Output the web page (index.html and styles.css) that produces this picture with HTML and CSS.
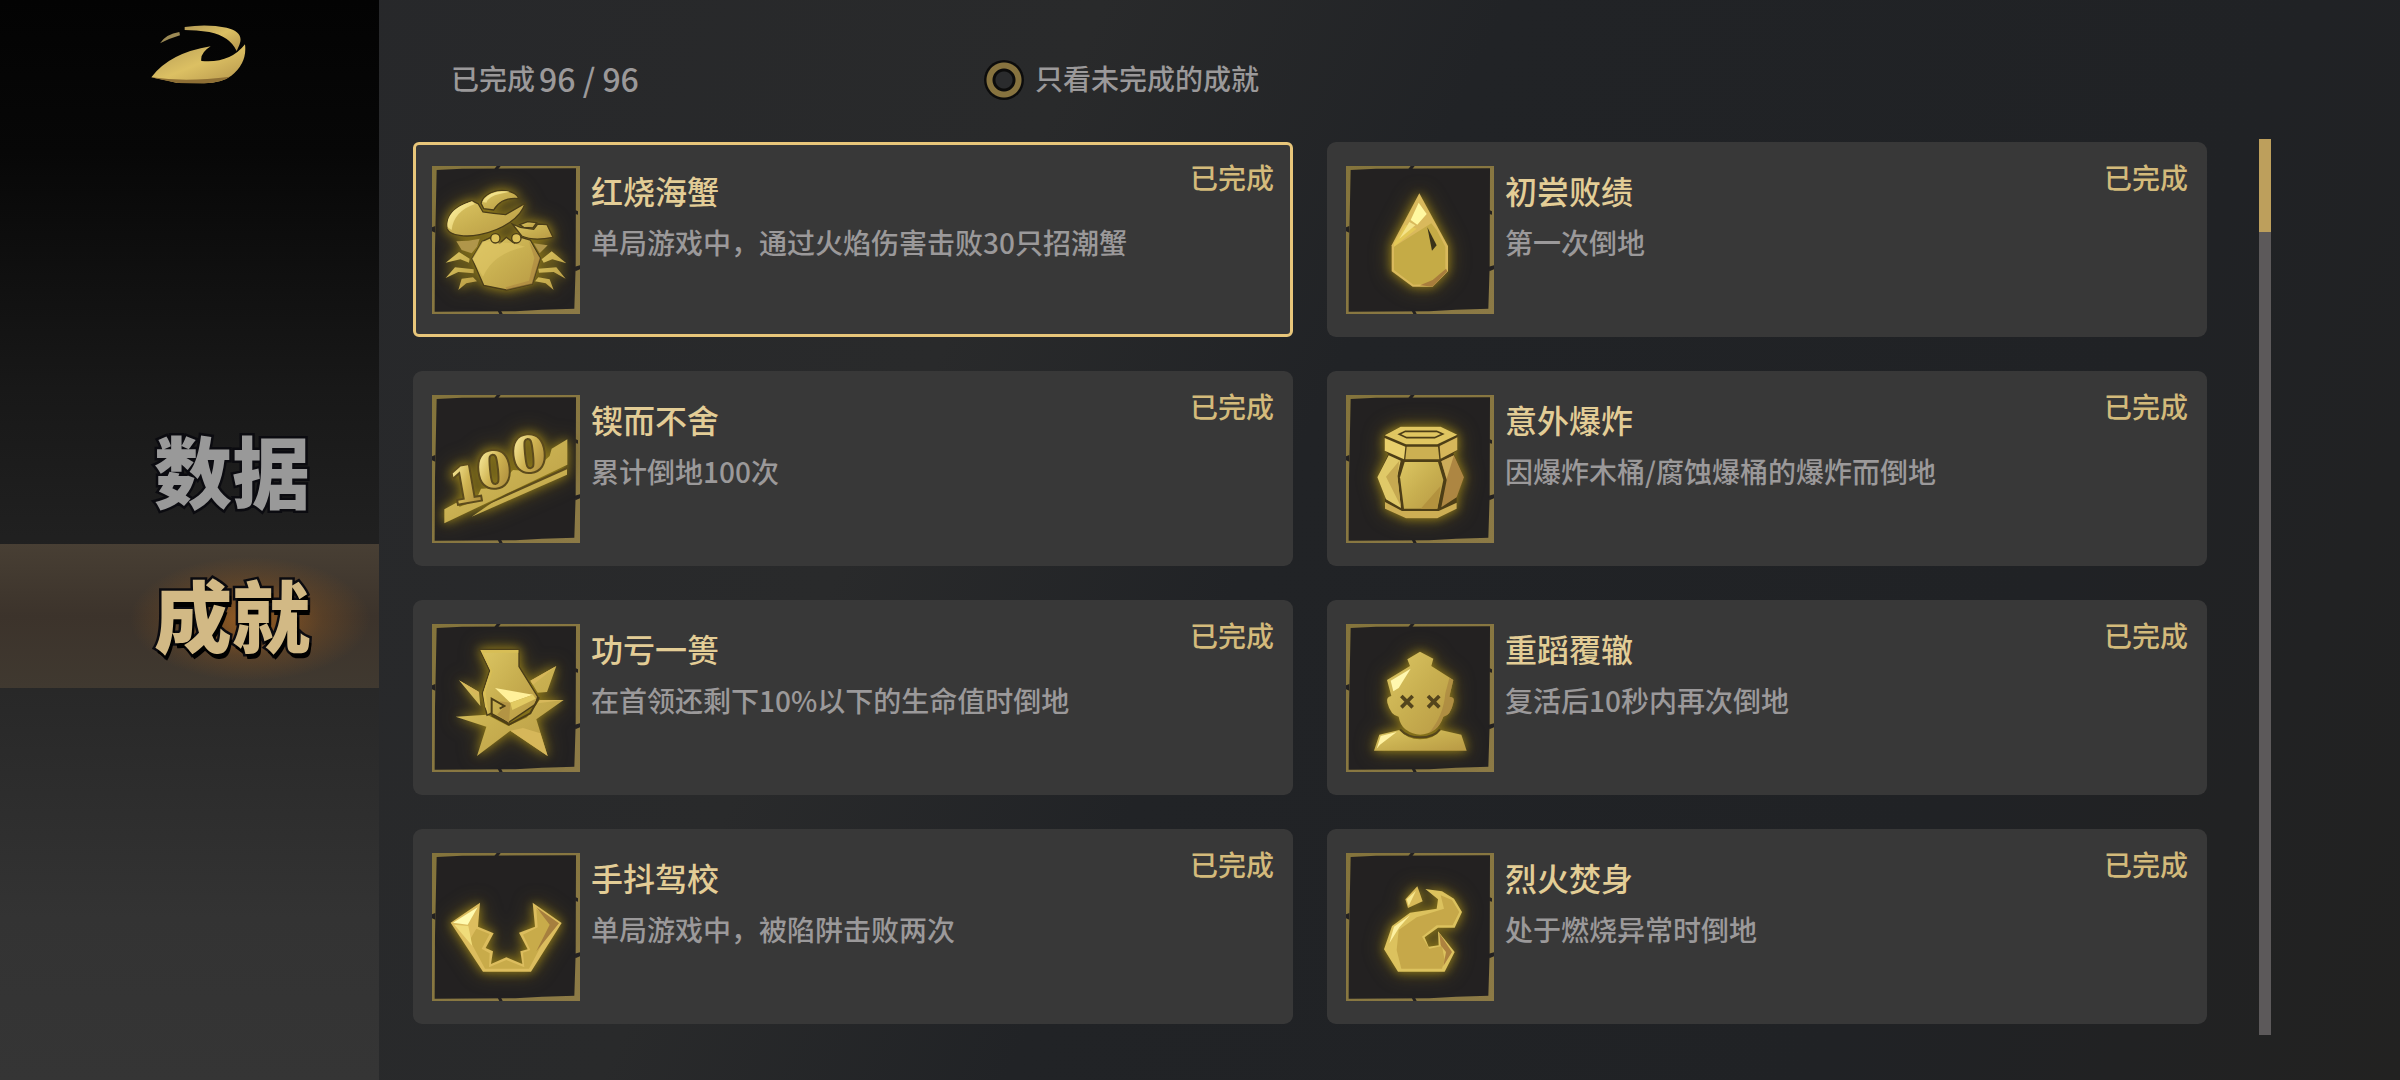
FILE: index.html
```html
<!DOCTYPE html>
<html lang="zh-CN">
<head>
<meta charset="UTF-8">
<meta name="viewport" content="width=device-width, initial-scale=1.0">
<title>成就</title>
<link rel="stylesheet" href="styles.css">
</head>
<body>
<!-- 共用的渐变和图标边框 -->
<svg class="defs" aria-hidden="true">
  <defs>
    <linearGradient id="gold" x1="0" y1="0" x2="1" y2="1">
      <stop offset="0" stop-color="#dcc663"/>
      <stop offset="0.5" stop-color="#c8af50"/>
      <stop offset="1" stop-color="#b89944"/>
    </linearGradient>
    <linearGradient id="shine" x1="0" y1="0" x2="1" y2="1">
      <stop offset="0" stop-color="#fff3a4"/>
      <stop offset="1" stop-color="#d8bf5a"/>
    </linearGradient>
    <linearGradient id="digitGold" x1="0" y1="0" x2="1" y2="1">
      <stop offset="0.2" stop-color="#f2e290"/>
      <stop offset="0.5" stop-color="#cfb352"/>
      <stop offset="0.8" stop-color="#b1913f"/>
    </linearGradient>
    <linearGradient id="logoGold" x1="0" y1="0" x2="1" y2="1">
      <stop offset="0" stop-color="#b39a55"/>
      <stop offset="0.5" stop-color="#dcc063"/>
      <stop offset="1" stop-color="#b3934a"/>
    </linearGradient>
    <linearGradient id="rim" x1="0" y1="0" x2="1" y2="1">
      <stop offset="0" stop-color="#84743c"/>
      <stop offset="1" stop-color="#8c7a46"/>
    </linearGradient>
    <symbol id="frame" viewBox="0 0 444 444">
      <path fill="url(#rim)" d="M0 0H444V444H0Z"/>
      <path fill="#232121" d="M14 12L90 8L432 7L431 300L427 428L330 431L250 436L8 437L9 250Z"/>
      <path fill="#232121" d="M187 9L194 0H206L199 9ZM0 184L10 180V200L0 196ZM430 132L438 136V146L430 144ZM428 302L444 298V310L430 316ZM196 432H206L212 444H202Z"/>
    </symbol>
  </defs>
</svg>

<div class="page">
  <aside class="sidebar">
    <a class="logo" href="#" aria-label="首页">
      <svg viewBox="93 76 285 177">
        <path fill="#9c8a55" d="M120 131Q138 103 178 97L180 107Q152 115 120 131Z"/>
        <path fill="url(#logoGold)" d="M194 82Q260 72 320 84Q374 98 358 136L350 154Q330 110 268 97Q228 91 194 91Z"/>
        <path fill="url(#logoGold)" d="M94 233Q148 160 272 140Q240 160 244 184Q330 192 375 134Q382 190 334 228Q306 250 252 251L172 250Q120 238 94 233Z"/>
        <path fill="#8e6f35" d="M94 233Q200 248 330 231Q305 249 252 251L172 250Q120 240 94 233Z"/>
      </svg>
    </a>
    <nav class="tabs">
      <a class="tab" href="#data">数据</a>
      <a class="tab active" href="#achievements" aria-current="page">成就</a>
    </nav>
  </aside>

  <main class="main">
    <header class="toolbar">
      <p class="counter">已完成<span class="number">96 / 96</span></p>
      <div class="filter">
        <input type="checkbox" id="onlyOpen">
        <label for="onlyOpen">只看未完成的成就</label>
      </div>
    </header>

    <div class="content">
      <ul class="list">
        <li class="card selected">
          <svg class="icon" viewBox="0 0 444 444" aria-hidden="true">
            <use href="#frame"/>
            <g class="glow" transform="translate(-97 -108)">
              <path fill="#b0964a" d="M170 334L206 332L240 326L232 350L216 370L186 360ZM402 340L444 346L420 370Z"/>
              <path class="edge" fill="url(#gold)" d="M338 282L362 292L402 298L414 282L442 284L460 322Q400 334 366 318Z"/>
              <path class="edge" fill="url(#gold)" d="M360 284L384 275L411 278L400 294L372 292Z"/>
              <path class="edge" fill="url(#gold)" d="M217 212C160 230 138 260 142 296C152 318 200 322 240 314C310 300 364 262 376 220L318 254L282 250L250 246L236 222Z"/>
              <path fill="url(#shine)" d="M217 214C160 232 140 260 144 292L156 300C160 262 184 236 226 222Z"/>
              <path class="edge" fill="url(#gold)" d="M244 220C252 190 290 178 318 182C342 186 354 196 358 206C322 202 296 216 282 240L252 236Z"/>
              <path fill="url(#shine)" d="M248 216C262 188 300 180 330 185L300 192Q268 198 260 218Z"/>
              <path class="edge" fill="url(#gold)" d="M248 334L274 322L300 340L320 322L344 340L364 322L392 330L422 384L398 462L320 480L252 466L217 386Z"/>
              <path fill="#a98340" opacity=".55" d="M422 384L398 462L320 480L318 472L388 452L404 384L388 334Z"/>
              <path fill="#dfc765" opacity=".6" d="M250 440L217 386L248 334L340 340L376 350Q280 370 250 440Z"/>
              <circle class="edge" cx="287" cy="325" r="14" fill="#dcc25a"/>
              <circle class="edge" cx="350" cy="325" r="14" fill="#dcc25a"/>
              <path fill="url(#gold)" d="M138 398L178 366L210 386L208 398L182 388ZM138 444L166 412L222 418L222 430L176 426ZM176 480L186 446L220 442L232 454L200 460Z"/>
              <path fill="url(#gold)" d="M500 400L456 364L426 388L432 398L458 388ZM498 446L470 412L416 416L418 428L462 426ZM462 480L450 448L416 442L406 454L438 460Z"/>
            </g>
          </svg>
          <div class="info">
            <h3>红烧海蟹</h3>
            <p>单局游戏中，通过火焰伤害击败30只招潮蟹</p>
          </div>
          <span class="status">已完成</span>
        </li>

        <li class="card">
          <svg class="icon" viewBox="0 0 444 444" aria-hidden="true">
            <use href="#frame"/>
            <g class="glow" transform="translate(-78 -108)">
              <path fill="#d9b95c" d="M298 190L384 348V424L338 470H278L215 424V346Z"/>
              <path fill="#c5ab46" d="M334 280L350 300L376 350V420L334 462L280 464L222 420V350Z"/>
              <path fill="#a87d3c" d="M382 424L338 470L300 466L338 450L378 416Z"/>
              <path fill="#e3c856" d="M256 284L290 296L222 350V340Z"/>
              <path fill="#fff8a0" d="M296 218L320 252L292 284L272 270Z"/>
              <path fill="#f4e388" d="M268 276L286 286L238 326Z"/>
              <path fill="#3a3218" d="M322 292L350 346L336 362Z"/>
            </g>
          </svg>
          <div class="info">
            <h3>初尝败绩</h3>
            <p>第一次倒地</p>
          </div>
          <span class="status">已完成</span>
        </li>

        <li class="card">
          <svg class="icon" viewBox="0 0 444 444" aria-hidden="true">
            <use href="#frame"/>
            <g class="glow" transform="translate(-67 -75)">
              <path fill="url(#gold)" d="M104 418L140 398L150 410L198 392L214 356L260 354L310 300L370 304L420 258L426 236L473 208V284L104 460Z"/>
              <path fill="url(#gold)" d="M472 292V314L186 440L250 396Z"/>
              <path fill="#5c4b1c" d="M472 290V298L212 414L290 372Z"/>
              <text class="digit" transform="translate(128 404) rotate(-10)">1</text>
              <text class="digit" transform="translate(208 356) rotate(-6)">0</text>
              <text class="digit" transform="translate(313 309) rotate(-6)">0</text>
            </g>
          </svg>
          <div class="info">
            <h3>锲而不舍</h3>
            <p>累计倒地100次</p>
          </div>
          <span class="status">已完成</span>
        </li>

        <li class="card">
          <svg class="icon" viewBox="0 0 444 444" aria-hidden="true">
            <use href="#frame"/>
            <g class="glow" transform="translate(-78 -75)">
              <path fill="#4d3e16" d="M242 170H362L412 194V240L400 250L432 322L410 376V416L352 445H258L195 416V380L172 322L205 252L193 240V194Z"/>
              <path fill="#e0c661" d="M242 170H362L412 194L352 223H258L194 196Z"/>
              <path fill="none" stroke="#4d3e16" stroke-width="5" d="M256 184H350L368 192L344 203H260L238 193Z"/>
              <path fill="#e8cf6c" d="M194 204L256 230L252 268L194 242Z"/>
              <path fill="#ccb052" d="M260 230H354L358 268H256Z"/>
              <path fill="#d6b65a" d="M359 228L412 202V240L362 266Z"/>
              <path fill="url(#gold)" d="M254 276H354L370 330L352 416H252L240 322Z"/>
              <path fill="#b3923e" d="M362 348L352 416H302Z"/>
              <path fill="#e0c968" d="M206 256L242 272L232 318L243 414L198 388L172 322Z"/>
              <path fill="#c6a951" d="M238 272L198 320L242 408L232 318Z"/>
              <path fill="#ad8642" d="M402 256L364 274L380 330L364 412L410 382L432 322Z"/>
              <path fill="#cdac5a" d="M402 256L364 274L380 326Z"/>
              <path fill="#cdae54" d="M195 396L246 423H356L410 398V416L352 445H258L195 416Z"/>
            </g>
          </svg>
          <div class="info">
            <h3>意外爆炸</h3>
            <p>因爆炸木桶/腐蚀爆桶的爆炸而倒地</p>
          </div>
          <span class="status">已完成</span>
        </li>

        <li class="card">
          <svg class="icon" viewBox="0 0 444 444" aria-hidden="true">
            <use href="#frame"/>
            <g class="glow" transform="translate(-67 -72)">
              <path fill="url(#gold)" d="M148 241L208 276L212 318ZM440 198L412 276L384 278L362 242ZM138 350L232 344L296 378L352 352L390 300L462 300L380 358L414 468L302 392L202 468L230 380Z"/>
              <path fill="#d6b75a" d="M148 241L208 276L206 290ZM440 198L362 242L370 254ZM462 300L390 300L384 310ZM302 392L414 468L392 400L340 384Z"/>
              <path class="edge" fill="url(#gold)" d="M210 148H328V200L384 290L378 312L296 368L244 340L232 346L218 280L240 212Z"/>
              <path fill="#d8be56" d="M212 150H326V158H222L248 214L228 276L236 340L226 320L220 280L242 212Z"/>
              <path fill="#fff09a" d="M256 264L370 284L302 308Z"/>
              <path fill="#e2ca62" d="M370 284L302 308L308 330L378 296Z"/>
              <path fill="#b39444" d="M302 308L298 368L262 344L284 320L270 304Z"/>
              <path fill="none" stroke="#4d3e16" stroke-width="6" d="M246 346V296L284 318L270 326M246 346L298 374L362 340L388 292"/>
            </g>
          </svg>
          <div class="info">
            <h3>功亏一篑</h3>
            <p>在首领还剩下10%以下的生命值时倒地</p>
          </div>
          <span class="status">已完成</span>
        </li>

        <li class="card">
          <svg class="icon" viewBox="0 0 444 444" aria-hidden="true">
            <use href="#frame"/>
            <g class="glow" transform="translate(-78 -72)">
              <path fill="url(#gold)" d="M300 155L340 176L334 198L400 240L388 290Q406 290 400 308Q392 346 370 350Q362 374 346 388Q300 420 256 388Q240 374 236 350Q212 346 202 308Q198 290 214 288L201 240L270 198L262 178Z"/>
              <path fill="#a5803d" opacity=".6" d="M388 234L400 240L388 290Q406 290 400 308Q392 346 370 350Q356 388 326 400Q370 350 376 280Z"/>
              <path fill="#fff7ae" d="M272 206L236 264L220 274L212 242Z"/>
              <path fill="url(#gold)" d="M238 390Q262 418 300 418Q342 418 362 390L424 404L440 452H162L178 404Z"/>
              <path fill="#fff3a4" d="M230 396L180 434L170 446L182 408Z"/>
              <path fill="none" stroke="#54451c" stroke-width="6" d="M240 388Q262 412 300 412Q342 412 360 388"/>
              <path fill="none" stroke="#54451c" stroke-width="11" d="M244 288L278 322M278 288L244 322M324 288L358 322M358 288L324 322"/>
            </g>
          </svg>
          <div class="info">
            <h3>重蹈覆辙</h3>
            <p>复活后10秒内再次倒地</p>
          </div>
          <span class="status">已完成</span>
        </li>

        <li class="card">
          <svg class="icon" viewBox="0 0 444 444" aria-hidden="true">
            <use href="#frame"/>
            <g class="glow" transform="translate(-67 -69)">
              <path fill="#dcbd5e" d="M211 218L205 290L252 310L228 354L250 364L244 402L290 382L338 402L332 364L354 358L328 308L376 290L369 218L456 279L364 425H220L123 278Z"/>
              <path fill="#c8ab4a" d="M200 296L240 312L216 356L240 370L238 412L290 390L344 412L340 368L362 360L340 314L384 292L380 236L430 280L358 416H226L180 330Z"/>
              <path fill="#fffbb0" d="M204 232L174 284L130 278Z"/>
              <path fill="#f0dc7a" d="M134 284L176 288L188 348Z"/>
              <path fill="#a67f3e" d="M380 232L448 280L380 364L420 284Z"/>
            </g>
          </svg>
          <div class="info">
            <h3>手抖驾校</h3>
            <p>单局游戏中，被陷阱击败两次</p>
          </div>
          <span class="status">已完成</span>
        </li>

        <li class="card">
          <svg class="icon" viewBox="0 0 444 444" aria-hidden="true">
            <use href="#frame"/>
            <g class="glow" transform="translate(-78 -69)">
              <path fill="#d8ba58" d="M292 169L308 214L264 234L256 208Z"/>
              <path fill="#f7e78e" d="M288 182L266 228L260 208Z"/>
              <path fill="#dcc25e" d="M316 177L366 184L402 206L426 246L404 293H354L314 322L326 350L356 346L354 304L404 366L374 425H234L192 358L216 288L270 248L350 236L354 208Z"/>
              <path fill="#c6a849" d="M362 196L372 236L290 262L236 300L230 360L244 416H366L374 390L366 348L328 356L306 320L350 286H398L418 246L396 210Z"/>
              <path fill="#ad823f" d="M358 310L396 366L370 408L378 366L362 346Z"/>
              <path fill="#fdf0a0" d="M270 256L222 290L208 340L238 292Z"/>
            </g>
          </svg>
          <div class="info">
            <h3>烈火焚身</h3>
            <p>处于燃烧异常时倒地</p>
          </div>
          <span class="status">已完成</span>
        </li>
      </ul>

      <div class="scrollbar">
        <div class="thumb"></div>
      </div>
    </div>
  </main>
</div>
</body>
</html>
```
FILE: styles.css
```css
* {
  box-sizing: border-box;
}

body {
  margin: 0;
  font-family: "Noto Sans CJK SC", "Noto Sans", sans-serif;
  font-size: 28px;
  font-weight: 500;
  color: #9b999a;
  background-color: #222326;
}

h3,
p,
ul {
  margin: 0;
  padding: 0;
}

.defs {
  display: block;
  width: 0;
  height: 0;
}

.page {
  display: flex;
  min-height: 100vh;
  background: linear-gradient(115deg, #26272a 0%, #292a2b 38%, #212326 52%, #202225 80%, #222221 100%);
}

/* 左侧导航 */
.sidebar {
  flex: 0 0 379px;
  background: linear-gradient(#030303 0%, #070707 14%, #181818 36%, #262626 60%, #333333 85%, #353535 100%);
}

.logo {
  display: block;
  width: 95px;
  margin: 25px 0 0 151px;
}

.logo svg {
  display: block;
  width: 100%;
}

.tabs {
  margin-top: 316px;
}

.tab {
  display: flex;
  align-items: center;
  height: 144px;
  padding: 0 0 6px 154px;
  font-size: 78px;
  font-weight: 900;
  line-height: 1;
  color: #999999;
  text-decoration: none;
  -webkit-text-stroke: 5px #0b0b10;
  paint-order: stroke fill;
}

.tab.active {
  color: #d2b985;
  background:
    radial-gradient(ellipse 120px 62px at 66% 52%, rgba(190, 110, 30, 0.7), rgba(150, 90, 30, 0.3) 60%, transparent),
    linear-gradient(#483f34, #3c332b 50%, #403930);
  text-shadow: 2px 5px 0 #000000;
}

/* 右侧成就列表 */
.main {
  flex: 1;
  display: flex;
  flex-direction: column;
  padding: 60px 129px 45px 34px;
}

.toolbar {
  display: grid;
  grid-template-columns: 533px auto;
  align-items: center;
  height: 40px;
  margin-bottom: 39px;
  padding-left: 38px;
  line-height: 36px;
}

.counter {
  display: flex;
  gap: 4px;
  height: 40px;
}

.number {
  font-size: 32px;
}

.filter {
  display: flex;
  gap: 11px;
}

.filter input {
  appearance: none;
  width: 40px;
  height: 40px;
  margin: 0;
  border-radius: 50%;
  background: radial-gradient(circle, #2a2b2d 8px, #0c0c0c 9px 11px, #87733f 12px 17px, #0c0c0c 18px);
  cursor: pointer;
}

.filter input:checked {
  background: radial-gradient(circle, #efcd7c 8px, #0c0c0c 9px 11px, #87733f 12px 17px, #0c0c0c 18px);
}

.content {
  flex: 1;
  display: flex;
  gap: 52px;
}

.list {
  flex: 1;
  display: grid;
  grid-template-columns: 1fr 1fr;
  align-content: start;
  gap: 34px;
  padding: 3px 0 11px;
  list-style: none;
}

.card {
  display: flex;
  align-items: flex-start;
  gap: 11px;
  padding: 21px 16px 20px 16px;
  border: 3px solid transparent;
  border-radius: 9px;
  background-color: #383838;
}

.card.selected {
  border-color: #e8c67a;
  border-radius: 6px;
}

.icon {
  flex: none;
  width: 148px;
  height: 148px;
}

.glow {
  filter: drop-shadow(0 0 14px #8f7a1c) drop-shadow(0 0 26px #5e5018);
}

.edge {
  stroke: #4a3d18;
  stroke-width: 4px;
}

.digit {
  font-family: "DejaVu Serif", serif;
  font-size: 146px;
  font-weight: bold;
  fill: url(#digitGold);
  stroke: #5c4b1c;
  stroke-width: 12px;
  paint-order: stroke fill;
}

.info {
  flex: 1;
  padding-top: 4px;
}

.info h3 {
  margin-bottom: 14px;
  font-size: 32px;
  font-weight: 500;
  line-height: 40px;
  color: #e3cd96;
}

.info p {
  line-height: 36px;
}

.status {
  line-height: 22px;
  color: #d3ba7b;
}

.scrollbar {
  width: 12px;
  background-color: #5c595a;
}

.thumb {
  height: 93px;
  background-color: #bd9f5c;
}
```
